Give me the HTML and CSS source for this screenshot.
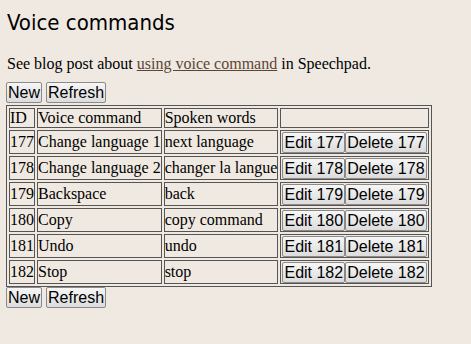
FILE: index.html
```html
<!DOCTYPE html>
<html lang="en">
<head>
    <meta charset="UTF-8">
    <meta name="viewport" content="width=device-width, initial-scale=1.0">
    <title>Voice commands</title>
    <link rel="stylesheet" href="styles.css">
</head>
<body>

<h1>Voice commands</h1>

<p class="intro">See blog post about <a href="#">using voice command</a> in Speechpad.</p>

<div class="toolbar">
    <button>New</button> <button>Refresh</button>
</div>

<table class="commands" border="1">
    <tr>
        <td>ID</td>
        <td>Voice command</td>
        <td>Spoken words</td>
        <td></td>
    </tr>
    <tr>
        <td>177</td>
        <td>Change language 1</td>
        <td>next language</td>
        <td class="actions"><button>Edit 177</button><button>Delete 177</button></td>
    </tr>
    <tr>
        <td>178</td>
        <td>Change language 2</td>
        <td>changer la langue</td>
        <td class="actions"><button>Edit 178</button><button>Delete 178</button></td>
    </tr>
    <tr>
        <td>179</td>
        <td>Backspace</td>
        <td>back</td>
        <td class="actions"><button>Edit 179</button><button>Delete 179</button></td>
    </tr>
    <tr>
        <td>180</td>
        <td>Copy</td>
        <td>copy command</td>
        <td class="actions"><button>Edit 180</button><button>Delete 180</button></td>
    </tr>
    <tr>
        <td>181</td>
        <td>Undo</td>
        <td>undo</td>
        <td class="actions"><button>Edit 181</button><button>Delete 181</button></td>
    </tr>
    <tr>
        <td>182</td>
        <td>Stop</td>
        <td>stop</td>
        <td class="actions"><button>Edit 182</button><button>Delete 182</button></td>
    </tr>
</table>

<div class="toolbar">
    <button>New</button> <button>Refresh</button>
</div>

</body>
</html>
```

FILE: styles.css
```css
/* General styling */
body {
    font-family: "Liberation Serif", "Times New Roman", serif;
    font-size: 16px;
    margin: 0;
    padding: 10px 6px;
    background-color: #efe9e1;
    color: #000;
}

h1 {
    font-family: "DejaVu Sans Condensed", "DejaVu Sans", sans-serif;
    font-weight: normal;
    font-size: 22px;
    margin: 0 0 20px 1px;
}

.intro {
    margin: 0 0 9px 1px;
}

.intro a {
    color: #5b4636;
}

/* Buttons */
button {
    font-family: "Liberation Sans", Arial, sans-serif;
    font-size: 16px;
    height: 21px;
    padding: 0 1px;
    margin: 0;
    color: #000;
    background: linear-gradient(#f6f6f6, #dcdcdc);
    border: 1px solid #8a8a8a;
    border-radius: 2px;
    vertical-align: top;
}

.toolbar {
    height: 22px;
}

/* Table */
.commands {
    border-spacing: 2px;
    border: 1px solid #555;
    margin-top: 1px;
}

.commands td {
    border: 1px solid #555;
    padding: 0;
    line-height: 18px;
    white-space: nowrap;
    text-align: left;
}

.commands td.actions {
    padding: 1px 1px 0;
}
```
